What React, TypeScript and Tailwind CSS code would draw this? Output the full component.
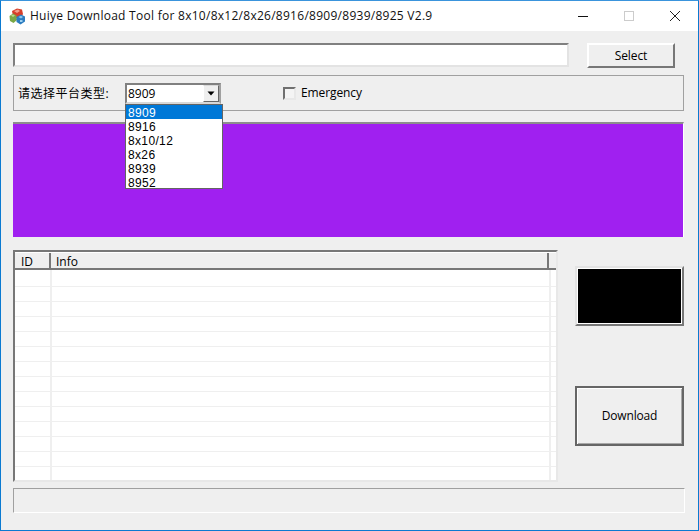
const font = { fontFamily: '"Open Sans","Noto Sans CJK SC",sans-serif' };
const listFont = { fontFamily: '"Liberation Sans",sans-serif' };

const rows = Array.from({ length: 14 });
const options = ["8909", "8916", "8x10/12", "8x26", "8939", "8952"];

function AppIcon() {
  return (
    <svg width="17" height="17" viewBox="0 0 17 17">
      <path d="M3 3 L8 0.5 L13 1.5 L14 6 L12 10 L7 10 L4 8 Z" fill="#d63f2a" />
      <path d="M5 3 L9 1.5 L11 3 L8 5 Z" fill="#f2a08c" />
      <path d="M0.5 8 L4 5.5 L7.5 7.5 L8 12 L4.5 15 L1 13 Z" fill="#7aa845" />
      <path d="M2 7.5 L4 6.5 L6 7.5 L4 9 Z" fill="#b9d68f" />
      <path d="M7.5 9 L12 6.5 L16 8.5 L16 13.5 L11.5 16.5 L7.5 14 Z" fill="#2b7cc0" />
      <path d="M9.5 9 L12 7.8 L14 9 L12 10.5 Z" fill="#8cc6ee" />
      <path d="M11 12 H13.5 V14 H11 Z" fill="#9ed0f0" />
    </svg>
  );
}

export default function App() {
  return (
    <div className="w-[699px] h-[531px] flex flex-col border border-[#0b7ad1] border-t-[#3a94dc] bg-[#efefef] text-[12px] text-black overflow-hidden" style={font}>
      <div className="h-[30px] shrink-0 bg-white flex items-center pl-[8px]">
        <AppIcon />
        <span className="ml-[4px] text-[12px] tracking-[0.27px] text-[#111]">Huiye Download Tool for 8x10/8x12/8x26/8916/8909/8939/8925 V2.9</span>
        <div className="ml-auto flex items-center">
          <svg width="46" height="30" viewBox="0 0 46 30"><path d="M18 15.5 H28" stroke="#111" /></svg>
          <svg width="46" height="30" viewBox="0 0 46 30"><rect x="18.5" y="10.5" width="9" height="9" fill="none" stroke="#ccc" /></svg>
          <svg width="46" height="30" viewBox="0 0 46 30"><path d="M18 10 L28 20 M28 10 L18 20" stroke="#222" /></svg>
        </div>
      </div>

      <div className="relative flex-1 flex flex-col pl-[12px] pr-[14px]">
        <div className="flex items-start mt-[12px] h-[25px]">
          <div className="w-[556px] h-[24px] bg-white border-2 border-r-[#e3e3e3] border-b-[#e3e3e3] border-l-[#808080] border-t-[#808080]" />
          <button className="ml-[18px] w-[88px] h-[25px] bg-[#efefef] border-2 border-t-white border-l-white border-r-[#777] border-b-[#777] flex items-center justify-center text-[12px] tracking-[-0.1px]">Select</button>
        </div>

        <div className="mt-[7px] w-[671px] h-[36px] border border-[#a0a0a0] flex items-center">
          <span className="ml-[4px] w-[107px] pt-[1px] text-[12px] tracking-[0.5px]">请选择平台类型:</span>
          <div className="w-[96px] h-[21px] bg-white border-2 border-t-[#808080] border-l-[#808080] border-r-[#a0a0a0] border-b-[#d8d8d8] flex items-center justify-between">
            <span className="ml-[1px] pt-[2px]">8909</span>
            <span className="w-[16px] h-[17px] bg-[#efefef] border border-t-[#d8d8d8] border-l-white border-r-[#666] border-b-[#666] flex items-center justify-center">
              <svg width="8" height="5" viewBox="0 0 8 5"><path d="M0.5 0.5 H7.5 L4 4.5 Z" fill="#000" /></svg>
            </span>
          </div>
          <span className="ml-[62px] w-[13px] h-[13px] bg-[#f4f4f4] border-2 border-t-[#707070] border-l-[#707070] border-r-[#e8e8e8] border-b-[#e8e8e8]" />
          <span className="ml-[5px] tracking-[-0.1px]">Emergency</span>
        </div>

        <div className="mt-[11px] w-[671px] h-[115px] bg-[#a020f0] border-t-2 border-[#8d8d8d] border-r border-r-white" />

        <div className="flex mt-[13px] items-start">
          <div className="w-[545px] h-[232px] bg-white border-2 border-[#777] border-r-[#e8e8e8] border-b-[#e8e8e8] overflow-hidden">
            <div className="h-[18px] flex bg-[#efefef] border-b-2 border-[#777] border-t border-t-white">
              <div className="w-[36px] border-r-2 border-[#777] pl-[6px] pt-[3px] flex items-center">ID</div>
              <div className="w-[498px] border-r-2 border-[#777] pl-[5px] pt-[3px] flex items-center">Info</div>
            </div>
            {rows.map((_, i) => (
              <div key={i} className={i === 0 ? "h-[17px] flex border-b border-[#efefef]" : "h-[15px] flex border-b border-[#efefef]"}>
                <div className="w-[37px] border-r-2 border-[#efefef]" />
                <div className="w-[499px] border-r-2 border-[#efefef]" />
              </div>
            ))}
          </div>
          <div className="ml-[17px] w-[109px] flex flex-col">
            <div className="mt-[16px] h-[60px] flex p-px bg-white border-2 border-t-[#e3e3e3] border-l-[#e3e3e3] border-r-[#777] border-b-[#777]">
              <div className="flex-1 bg-black" />
            </div>
            <button className="mt-[60px] h-[60px] bg-[#efefef] border-2 border-[#666] shadow-[inset_1px_1px_0_#fff,inset_-1px_-1px_0_#a8a8a8] flex items-center justify-center tracking-[-0.15px]">Download</button>
          </div>
        </div>

        <div className="mt-[6px] w-[672px] h-[25px] border border-t-[#a0a0a0] border-l-[#a0a0a0] border-r-white border-b-white" />

        <div className="absolute left-[124px] top-[73px] w-[98px] h-[85px] bg-white border border-[#646464] flex flex-col leading-[14px] tracking-[0.35px]" style={listFont}>
          {options.map((o, i) => (
            <div key={o} className={i === 0 ? "h-[14px] pl-[2px] pt-px bg-[#0078d7] text-white" : "h-[14px] pl-[2px] pt-px"}>{o}</div>
          ))}
        </div>
      </div>
    </div>
  );
}
